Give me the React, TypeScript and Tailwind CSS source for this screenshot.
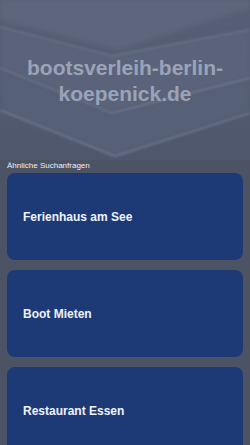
import React from "react";

const searches = ["Ferienhaus am See", "Boot Mieten", "Restaurant Essen"];

// Hintergrund mit den Winkeln im Kopfbereich
const ChevronBackdrop = () => (
  <svg
    className="absolute inset-0 h-full w-full"
    viewBox="0 0 250 160"
    preserveAspectRatio="none"
  >
    <defs>
      <linearGradient id="base" x1="0" y1="0" x2="0" y2="1">
        <stop offset="0" stopColor="#565f75" />
        <stop offset="1" stopColor="#4f576c" />
      </linearGradient>
      <filter id="soft" x="-10%" y="-10%" width="120%" height="120%">
        <feGaussianBlur stdDeviation="2.5" />
      </filter>
      <filter id="edge" x="-10%" y="-10%" width="120%" height="120%">
        <feGaussianBlur stdDeviation="1.1" />
      </filter>
    </defs>
    <rect width="250" height="160" fill="url(#base)" />
    <g filter="url(#soft)">
      <polygon points="30,0 250,0 250,8 118,50 0,20 0,0" fill="#5d667c" />
      <polygon points="0,28 112,55 250,30 250,78 112,112 0,68" fill="#5a6379" />
      <polygon points="0,70 112,114 250,80 250,112 115,156 0,112" fill="#576076" />
    </g>
    <g filter="url(#edge)" fill="none" strokeWidth="1.3">
      <polyline points="0,27 112,56 250,30" stroke="#6a7388" />
      <polyline points="0,68 112,113 250,78" stroke="#717a8f" />
      <polyline points="0,110 115,156 250,113" stroke="#788196" />
    </g>
  </svg>
);

export default function App() {
  return (
    <div
      className="min-h-[445px] w-[250px] bg-[#4b5364]"
      style={{ fontFamily: '"Liberation Sans", Arial, sans-serif' }}
    >
      <header className="relative h-[160px] overflow-hidden">
        <ChevronBackdrop />
        <h1 className="relative pt-[55px] text-center text-[21px] font-bold leading-[26px] text-[#9aa3b8]">
          bootsverleih-berlin-
          <br />
          koepenick.de
        </h1>
      </header>
      <p className="h-[13px] pl-[7px] text-[8px] leading-[11px] text-[#eef0f4]">
        Ähnliche Suchanfragen
      </p>
      <div className="flex flex-col gap-[10px] px-[7px] pb-[10px]">
        {searches.map((s) => (
          <a
            key={s}
            href="#"
            className="flex h-[87px] items-center rounded-lg bg-[#1e3a76] pl-4 text-[12px] font-bold text-[#eef2fb]"
          >
            {s}
          </a>
        ))}
      </div>
    </div>
  );
}
